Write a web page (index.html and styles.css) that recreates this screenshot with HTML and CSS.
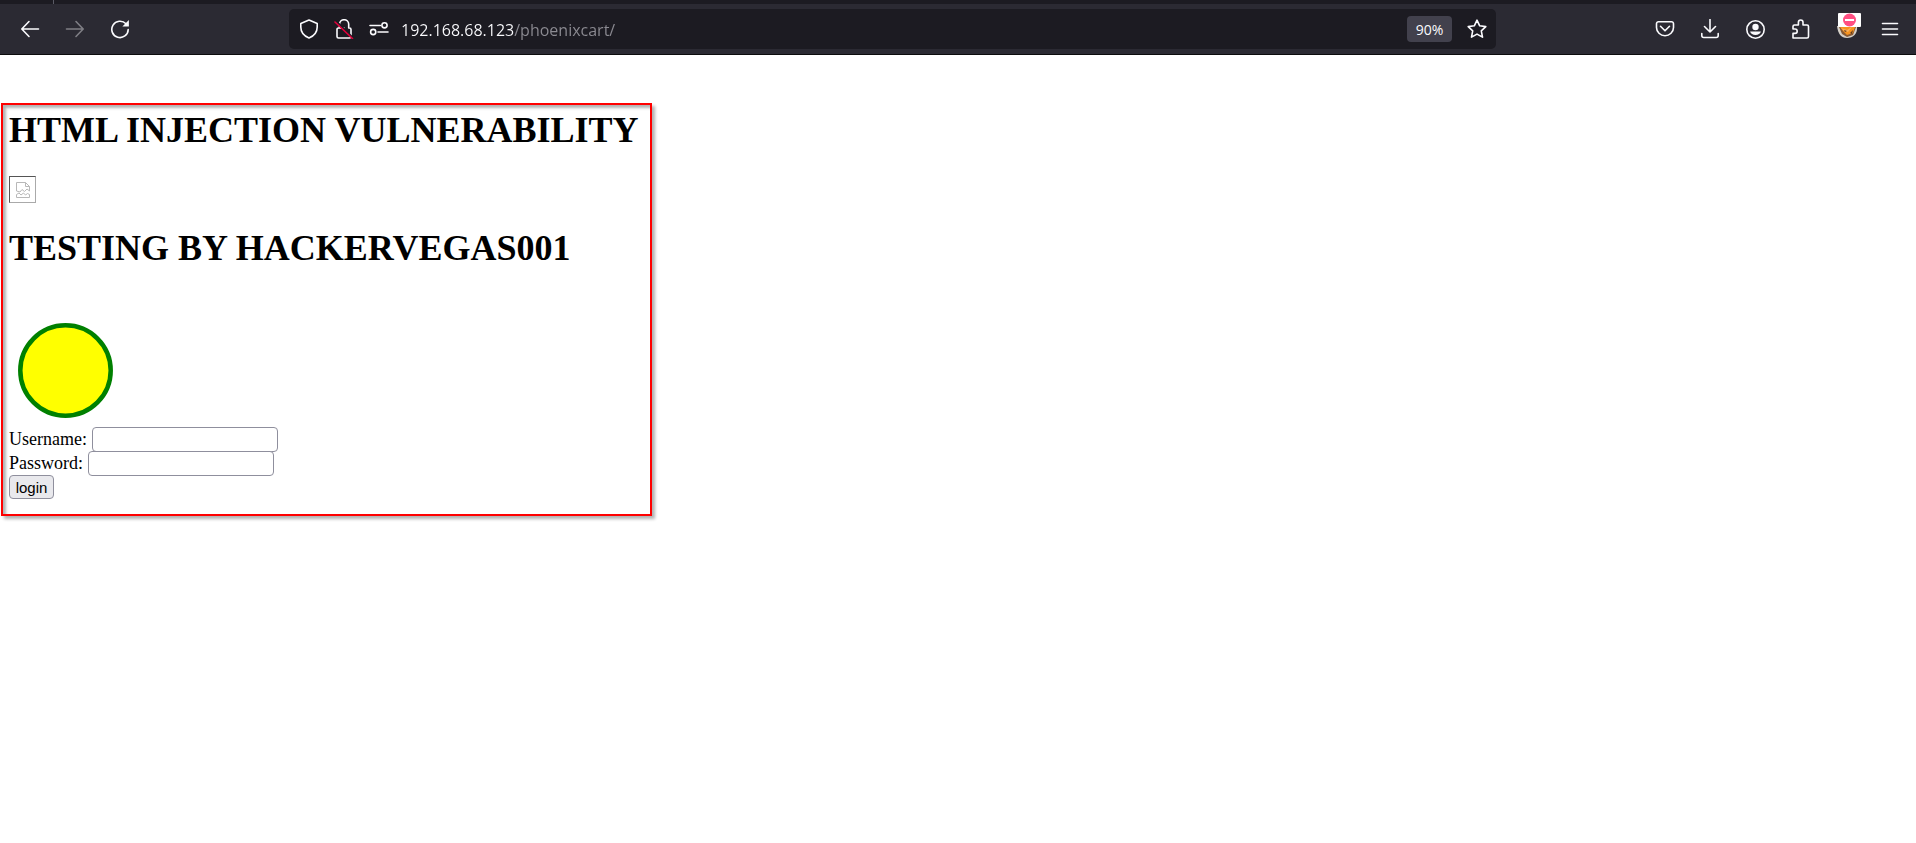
FILE: index.html
```html
<!DOCTYPE html>
<html lang="en">
<head>
<meta charset="utf-8">
<title>phoenixcart</title>
<link rel="stylesheet" href="styles.css">
</head>
<body>
<header class="browser">
  <div class="tab-strip"><span class="tab-edge"></span></div>
  <nav class="toolbar" aria-label="Navigation">
    <button class="tool" aria-label="Back"><svg class="icon" viewBox="0 0 20 20"><path d="M18.500 10H2M9 2.500 1.800 10 9 17.500"/></svg></button>
    <button class="tool tool-disabled" aria-label="Forward" disabled><svg class="icon" viewBox="0 0 20 20"><path d="M1.500 10H18M11 2.500 18.200 10 11 17.500"/></svg></button>
    <button class="tool" aria-label="Reload"><svg class="icon" viewBox="0 0 20 20"><path d="M16 4.800A8.200 8.200 0 1 0 18.200 10.500"/><path class="solid" d="M18.900 1v6.500h-6.500z"/></svg></button>
    <div class="url-bar">
      <button class="url-tool" aria-label="Tracking protection"><svg class="icon" viewBox="0 0 20 20"><path d="M10 1 18.200 4.500V8c0 5.300-4 9.300-8.200 11C5.800 17.300 1.800 13.300 1.800 8V4.500z"/></svg></button>
      <button class="url-tool" aria-label="Connection not secure"><svg class="icon" viewBox="0 0 20 20"><path d="M5.500 9V5.300a4.600 4.600 0 0 1 9.200 0V9H15.500A1.500 1.500 0 0 1 17 10.500V17.500A1.500 1.500 0 0 1 15.500 19H4.500A1.500 1.500 0 0 1 3 17.500V10.500A1.500 1.500 0 0 1 4.500 9H10"/><path class="cut" d="M2.500 2.500 19 19"/><path class="slash" d="M1 3 18.500 19.500"/></svg></button>
      <button class="url-tool" aria-label="Permissions"><svg class="icon" viewBox="0 0 20 20"><path d="M1 6.500h10.500M9 13h10"/><circle cx="15.500" cy="6.300" r="2.600"/><circle cx="4.200" cy="13" r="2.600"/></svg></button>
      <input class="url-text" type="text" aria-label="Address" value="192.168.68.123/phoenixcart/">
      <button class="zoom">90%</button>
      <button class="url-tool" aria-label="Bookmark"><svg class="icon" viewBox="0 0 20 20"><path d="m10 1.200 2.700 5.600 6.100.8-4.500 4.200 1.200 6.300-5.500-3-5.500 3 1.200-6.300L1.200 7.600l6.100-.8z"/></svg></button>
    </div>
    <button class="tool" aria-label="Pocket"><svg class="icon" viewBox="0 0 20 20"><path d="M3.500 2.700h13a2 2 0 0 1 2 2V8.500a8.500 8.200 0 0 1-17 0V4.700a2 2 0 0 1 2-2zM5.500 7.300 10 11.800l4.500-4.500"/></svg></button>
    <button class="tool" aria-label="Downloads"><svg class="icon" viewBox="0 0 20 20"><path d="M10 .500v12.500M4.500 7.500 10 13l5.500-5.500M1.800 14.500v2a2 2 0 0 0 2 2h12.400a2 2 0 0 0 2-2v-2"/></svg></button>
    <button class="tool" aria-label="Account"><svg class="icon" viewBox="0 0 20 20"><circle cx="10.500" cy="10.500" r="8.700"/><circle class="solid" cx="10.500" cy="8" r="3.200"/><path class="solid" d="M5.100 12.500h10.800c-.5 2-2.800 3.500-5.400 3.500s-4.900-1.500-5.400-3.500z"/></svg></button>
    <button class="tool" aria-label="Extensions"><svg class="icon" viewBox="0 0 20 20"><path d="M3.500 19h13.500a1.500 1.500 0 0 0 1.500-1.500V7.500A1.500 1.500 0 0 0 17 6H13V3.300a2.300 2.300 0 0 0-4.600 0V6H4.500A1.500 1.500 0 0 0 3 7.500V10h2a2.200 2.200 0 0 1 0 4.400H3v4.600z"/></svg></button>
    <button class="tool tool-proxy" aria-label="Proxy switcher"><svg class="fox" viewBox="0 0 24 28"><path fill="#d5d0c8" d="M0 13h20c1 8-4 12-10 12S1 21 0 13z"/><path fill="#8a5a32" d="m2 14 3 7 5 3 6-2 3-8z"/><path fill="#f7931e" d="m3 14 3 4 4 4 6-2 2-6z"/><path fill="#fbb05a" d="m4 15 6 2 5-3-4 5-4-1z"/><path fill="#5c3a20" d="m7 17 3 1-2 1zm6 3 3-3-1 4z"/><rect fill="#fff" x="1" width="23" height="14" rx="1"/><circle cx="12.500" cy="7" r="6.500" fill="#ff4f82"/><path fill="#fff" d="M8 6h9v2H8z"/></svg></button>
    <button class="tool" aria-label="Menu"><svg class="icon" viewBox="0 0 20 20"><path d="M2.500 4.500h15M2.500 10h15M2.500 15.500h15"/></svg></button>
  </nav>
</header>
<main class="frame">
  <h1 class="title">HTML INJECTION VULNERABILITY</h1>
  <div class="broken" role="img" aria-label="Broken image"><svg class="broken-icon" viewBox="0 0 14 16"><path d="M.500 9V.500h9l4 4V9L11 7 8.500 9.500 6 7.500 4 10zM9.500.500v4h4M.500 15.500v-3L3 11l2 2 2.500-2 2 2 2-1.500 2 1v3z"/></svg></div>
  <h1 class="title">TESTING BY HACKERVEGAS001</h1>
  <svg class="disc" viewBox="0 0 100 100" aria-hidden="true"><circle cx="50" cy="50" r="40" fill="yellow" stroke="green" stroke-width="4"/></svg>
  <form class="login">
    <div class="row"><label for="user">Username:</label><input class="field" id="user" type="text"></div>
    <div class="row"><label for="pass">Password:</label><input class="field" id="pass" type="password"></div>
    <div class="row"><button class="submit" type="button">login</button></div>
  </form>
</main>
</body>
</html>
```
FILE: styles.css
```css
* { box-sizing: border-box; }
body { margin: 0; padding-bottom: 16px; background: #fff; color: #000; font-family: "Liberation Serif", serif; }
button, input { margin: 0; padding: 0; border: 0; background: none; }

.browser { background: #2b2a33; border-bottom: 1px solid #0c0c0d; color: #fbfbfe; }
.tab-strip { display: flex; height: 4px; padding-left: 53px; background: #1c1b22; }
.tab-edge { width: 1px; background: #5b5b66; }
.toolbar { display: flex; align-items: center; height: 50px; padding: 0 4px 0 7px; }
.tool, .url-tool { display: flex; flex: none; align-items: center; justify-content: center; height: 40px; color: inherit; }
.tool { width: 45px; }
.url-tool { width: 35px; }
.tool-disabled { opacity: 0.4; }
.tool-proxy { padding-left: 8px; }
.icon { width: 20px; height: 20px; fill: none; stroke: currentColor; stroke-width: 1.6; stroke-linecap: round; stroke-linejoin: round; }
.solid { fill: currentColor; stroke: none; }
.cut { stroke: #1c1b22; stroke-width: 2; }
.slash { stroke: #e2003b; }
.fox { width: 24px; height: 28px; margin-bottom: 4px; }

.url-bar { display: flex; flex: 1; align-items: center; height: 40px; margin: 0 146px 0 147px; padding: 0 2px; border-radius: 5px; background: #1c1b22; }
.url-text {
  flex: 1; min-width: 0; height: 32px; margin-left: 5px; padding-top: 2px; outline: 0;
  font: 16px "Open Sans", sans-serif;
  color: transparent; caret-color: #fbfbfe;
  background: linear-gradient(90deg, #fbfbfe 113px, #8c8b92 113px);
  -webkit-background-clip: text; background-clip: text;
}
.zoom { flex: none; width: 45px; height: 26px; margin-right: 7px; border-radius: 4px; background: #42414d; color: #fbfbfe; font: 14px "Open Sans", sans-serif; }

.frame { width: fit-content; margin: 48px 0 0 1px; padding: 4px 12px 15px 6px; border: 2px solid #f00; box-shadow: 3px 3px 3px rgba(0, 0, 0, 0.3), inset 3px 3px 3px rgba(0, 0, 0, 0.3); }
.title { margin: 0; font-size: 36px; line-height: 42px; font-weight: bold; }
.broken { display: flex; align-items: center; justify-content: center; width: 27px; height: 27px; margin: 25px 0 24px; border: 1px solid; border-color: #555 #aaa #aaa #555; }
.broken-icon { width: 14px; height: 16px; fill: none; stroke: #b8b8b8; stroke-width: 1; }
.disc { display: block; width: 113px; height: 113px; margin-top: 45px; }
.row { display: flex; align-items: center; gap: 5px; height: 24px; font-size: 18px; line-height: 24px; }
.field { width: 186px; height: 25px; padding: 0 4px; border: 1px solid #8f8f9d; border-radius: 4px; background: #fff; font: 15px "Liberation Sans", sans-serif; }
.submit { width: 45px; height: 24px; border: 1px solid #8f8f9d; border-radius: 4px; background: #e9e9ed; color: #000; font: 15px "Liberation Sans", sans-serif; }
```
